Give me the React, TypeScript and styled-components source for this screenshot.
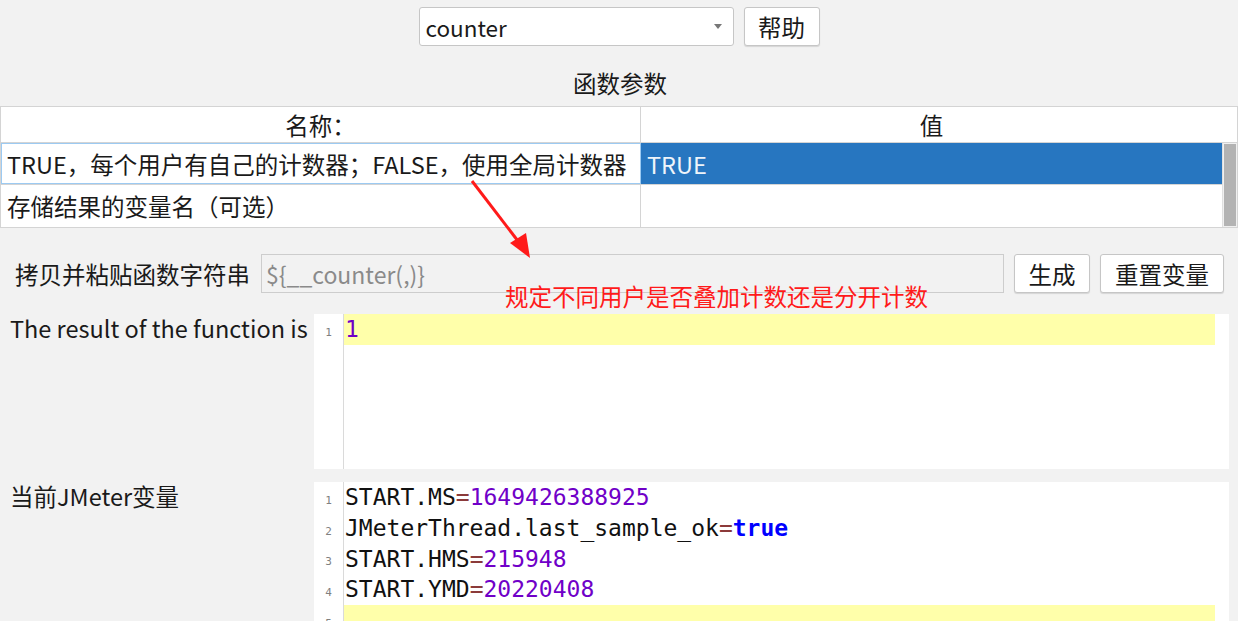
import React from "react";
import styled, { createGlobalStyle } from "styled-components";

const GlobalStyle = createGlobalStyle`
  html, body {
    margin: 0;
    padding: 0;
    background: #f2f2f2;
    overflow: hidden;
  }
  body {
    font-family: "Noto Sans CJK SC", "Noto Sans", sans-serif;
    color: #1a1a1a;
  }
`;

const Page = styled.div`
  position: relative;
  width: 1238px;
  height: 621px;
  overflow: hidden;
  display: flex;
  flex-direction: column;
  & > * {
    flex-shrink: 0;
  }
`;

const TopBar = styled.div`
  display: flex;
  justify-content: center;
  gap: 10px;
  padding-top: 7px;
`;

const Combo = styled.div`
  width: 315px;
  height: 39px;
  box-sizing: border-box;
  background: #fff;
  border: 1px solid #c6c6c6;
  border-radius: 3px;
  display: flex;
  align-items: center;
  padding: 0 7px 0 6px;
  font-size: 22.5px;
  justify-content: space-between;
`;

const Caret = styled.span`
  width: 0;
  height: 0;
  border-left: 4px solid transparent;
  border-right: 4px solid transparent;
  border-top: 5px solid #777;
  margin-right: 4px;
`;

const Button = styled.button<{ $w: number }>`
  width: ${(p) => p.$w}px;
  height: 39px;
  box-sizing: border-box;
  background: #fff;
  border: 1px solid #c6c6c6;
  border-radius: 3px;
  box-shadow: 0 1px 1px rgba(0, 0, 0, 0.12);
  font-family: "Noto Sans CJK SC", sans-serif;
  font-size: 23.5px;
  color: #1a1a1a;
  padding: 0;
`;

const SectionTitle = styled.div`
  text-align: center;
  font-size: 23.5px;
  line-height: 30px;
  margin-top: 22px;
  margin-bottom: 8px;
  padding-left: 2px;
`;

const Table = styled.div`
  width: 1238px;
  box-sizing: border-box;
  background: #fff;
  border: 1px solid #d4d4d4;
`;

const HeaderRow = styled.div`
  display: grid;
  grid-template-columns: 640px 1fr 15px;
  height: 35px;
`;

const Row = styled.div<{ $h: number }>`
  display: grid;
  grid-template-columns: 640px 1fr;
  height: ${(p) => p.$h}px;
`;

const HeaderCell = styled.div<{ $divider?: boolean }>`
  display: flex;
  align-items: center;
  justify-content: center;
  font-size: 23.5px;
  border-right: ${(p) => (p.$divider ? "1px solid #d4d4d4" : "none")};
`;

const Body = styled.div`
  display: flex;
  border-top: 1px solid #d4d4d4;
`;

const Rows = styled.div`
  flex: 1;
  display: flex;
  flex-direction: column;
  & > div + div {
    border-top: 1px solid #d4d4d4;
  }
`;

const Cell = styled.div<{ $focus?: boolean; $selected?: boolean }>`
  display: flex;
  align-items: center;
  box-sizing: border-box;
  padding-left: ${(p) => (p.$focus ? 5 : 6)}px;
  font-size: 23.5px;
  white-space: nowrap;
  border-right: 1px solid #d4d4d4;
  border: ${(p) => (p.$focus ? "1px solid #9ccaf2" : undefined)};
  background: ${(p) => (p.$selected ? "#2776c0" : "transparent")};
  color: ${(p) => (p.$selected ? "#eef4fa" : "#1a1a1a")};
  &:last-child {
    border-right: none;
  }
`;

const ScrollTrack = styled.div`
  width: 15px;
  background: #f0f0f0;
  border-left: 1px solid #e0e0e0;
  box-sizing: border-box;
  padding: 1px;
  display: flex;
`;

const ScrollThumb = styled.div`
  flex: 1;
  background: #b3b3b3;
`;

const CopyRow = styled.div`
  display: flex;
  align-items: center;
  gap: 10px;
  margin-top: 26px;
  padding-left: 15px;
`;

const CopyLabel = styled.span`
  font-size: 23.5px;
  width: 236px;
  white-space: nowrap;
`;

const TextInput = styled.div`
  width: 743px;
  height: 39px;
  box-sizing: border-box;
  border: 1px solid #cdcdcd;
  background: #f2f2f2;
  color: #8a8a8a;
  font-size: 23px;
  display: flex;
  align-items: center;
  padding-left: 4px;
`;

const Field = styled.div<{ $top: number; $h: number }>`
  display: grid;
  grid-template-columns: 314px 915px;
  margin-top: ${(p) => p.$top}px;
  height: ${(p) => p.$h}px;
`;

const FieldLabel = styled.div`
  font-size: 23.5px;
  padding-left: 10px;
  line-height: 28px;
  white-space: nowrap;
`;

const Editor = styled.div`
  background: #fff;
  display: flex;
  overflow: hidden;
`;

const Gutter = styled.div`
  width: 29px;
  border-right: 1px solid #dadada;
  display: flex;
  flex-direction: column;
`;

const LineNo = styled.div`
  height: 30.75px;
  flex-shrink: 0;
  font-family: "DejaVu Sans Mono", monospace;
  font-size: 11px;
  color: #808080;
  display: flex;
  align-items: flex-end;
  justify-content: center;
  padding-bottom: 6px;
  box-sizing: border-box;
`;

const Lines = styled.div`
  flex: 1;
  margin-right: 14px;
  display: flex;
  flex-direction: column;
`;

const CodeLine = styled.div<{ $current?: boolean }>`
  height: 30.75px;
  line-height: 30.75px;
  flex-shrink: 0;
  padding-left: 1px;
  font-family: "DejaVu Sans Mono", monospace;
  font-size: 23px;
  white-space: pre;
  background: ${(p) => (p.$current ? "#ffffaa" : "transparent")};
  color: #111;
`;

const Op = styled.span`
  color: #8b3a3a;
`;

const Num = styled.span`
  color: #7000c8;
`;

const Kw = styled.span`
  color: #0000ff;
  font-weight: bold;
`;

const Annotation = styled.div`
  position: absolute;
  left: 505px;
  top: 280px;
  color: #ff1a1a;
  font-size: 23.5px;
  line-height: 32px;
  white-space: nowrap;
`;

const Arrow = styled.svg`
  position: absolute;
  left: 460px;
  top: 175px;
  overflow: visible;
`;

type Var = { key: string; value: string; bool?: boolean };

const vars: Var[] = [
  { key: "START.MS", value: "1649426388925" },
  { key: "JMeterThread.last_sample_ok", value: "true", bool: true },
  { key: "START.HMS", value: "215948" },
  { key: "START.YMD", value: "20220408" },
];

export default function App() {
  return (
    <Page>
      <GlobalStyle />
      <TopBar>
        <Combo>
          <span>counter</span>
          <Caret />
        </Combo>
        <Button $w={76}>帮助</Button>
      </TopBar>

      <SectionTitle>函数参数</SectionTitle>

      <Table>
        <HeaderRow>
          <HeaderCell $divider>名称：</HeaderCell>
          <HeaderCell>值</HeaderCell>
          <HeaderCell />
        </HeaderRow>
        <Body>
          <Rows>
            <Row $h={41}>
              <Cell $focus>TRUE，每个用户有自己的计数器；FALSE，使用全局计数器</Cell>
              <Cell $selected>TRUE</Cell>
            </Row>
            <Row $h={42}>
              <Cell>存储结果的变量名（可选）</Cell>
              <Cell />
            </Row>
          </Rows>
          <ScrollTrack>
            <ScrollThumb />
          </ScrollTrack>
        </Body>
      </Table>

      <CopyRow>
        <CopyLabel>拷贝并粘贴函数字符串</CopyLabel>
        <TextInput>{"${__counter(,)}"}</TextInput>
        <Button $w={76}>生成</Button>
        <Button $w={124}>重置变量</Button>
      </CopyRow>

      <Field $top={21} $h={155}>
        <FieldLabel>The result of the function is</FieldLabel>
        <Editor>
          <Gutter>
            <LineNo>1</LineNo>
          </Gutter>
          <Lines>
            <CodeLine $current>
              <Num>1</Num>
            </CodeLine>
          </Lines>
        </Editor>
      </Field>

      <Field $top={13} $h={200}>
        <FieldLabel>当前JMeter变量</FieldLabel>
        <Editor>
          <Gutter>
            {[1, 2, 3, 4, 5].map((n) => (
              <LineNo key={n}>{n}</LineNo>
            ))}
          </Gutter>
          <Lines>
            {vars.map((v) => (
              <CodeLine key={v.key}>
                {v.key}
                <Op>=</Op>
                {v.bool ? <Kw>{v.value}</Kw> : <Num>{v.value}</Num>}
              </CodeLine>
            ))}
            <CodeLine $current />
          </Lines>
        </Editor>
      </Field>

      <Arrow width="80" height="90" viewBox="0 0 80 90">
        <line x1="12" y1="6" x2="61" y2="70" stroke="#ff1a1a" strokeWidth="3" />
        <polygon points="70,83 50,68 66,58" fill="#ff1a1a" />
      </Arrow>
      <Annotation>规定不同用户是否叠加计数还是分开计数</Annotation>
    </Page>
  );
}
